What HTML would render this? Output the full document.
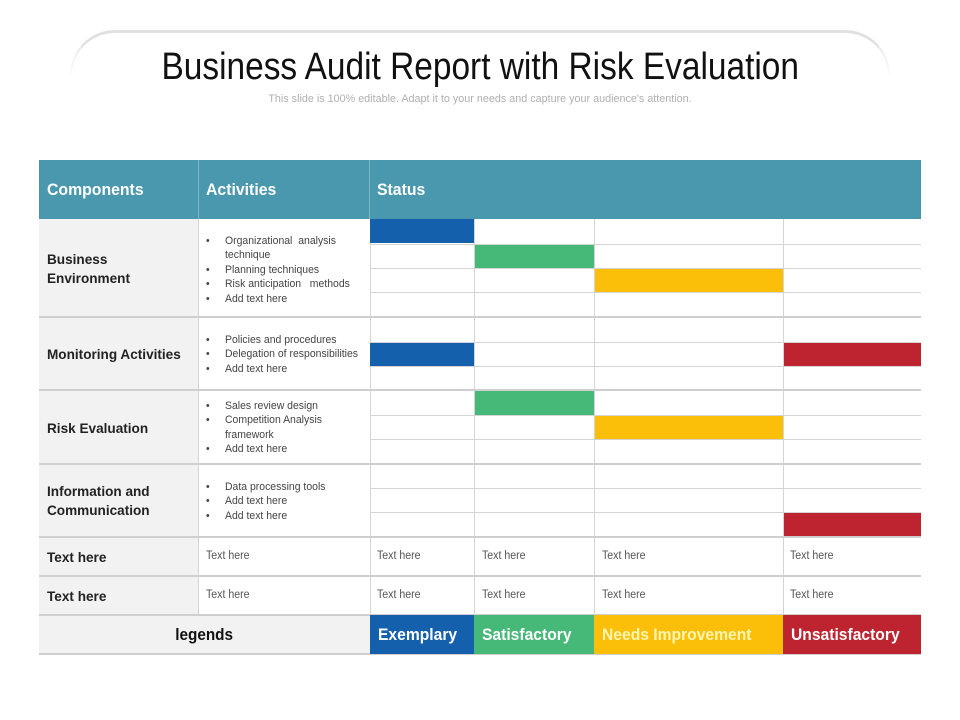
<!DOCTYPE html>
<html><head><meta charset="utf-8"><style>
*{margin:0;padding:0;box-sizing:border-box}
body{width:960px;height:720px;background:#fff;position:relative;overflow:hidden;font-family:"Liberation Sans",sans-serif}
.a{position:absolute}
.arc{left:70px;top:30px;width:820px;height:60px;border-top:3px solid #e0e0e0;border-radius:45px 45px 0 0;border-left:2px solid #ececec;border-right:2px solid #ececec;-webkit-mask:linear-gradient(#000 30%,transparent 80%);mask:linear-gradient(#000 30%,transparent 80%)}
.t{left:0;width:960px;top:46px;text-align:center;font-size:38px;color:#111}
.t span{display:inline-block;transform:scaleX(.88)}
.st{left:0;width:960px;top:93px;text-align:center;font-size:11px;color:#b0b0b0}
.st span{display:inline-block;transform:scaleX(.98)}
.hd{background:#4a98ae;top:160px;height:59px}
.hl{color:#fff;font-weight:bold;font-size:17px;top:180px;transform:scaleX(.93);transform-origin:left}
.lc{background:#f2f2f2;left:39px;width:159px}
.bl{font-weight:bold;font-size:14px;color:#222;left:47px;transform:scaleX(.97);transform-origin:left;line-height:19px}
.ul{left:206px;font-size:11px;color:#444;line-height:14.4px;transform:scaleX(.95);transform-origin:left;white-space:nowrap}
.ul div{padding-left:20px;position:relative}
.ul div:before{content:"•";position:absolute;left:0}
.hline{height:1px;background:#d4d4d4}
.mline{height:2px;background:#cfcfcf}
.vline{width:1px;background:#d4d4d4}
.sm{font-size:11.5px;color:#555;transform:scaleX(.92);transform-origin:left}
.lg{top:615px;height:39px;color:#fff;font-weight:bold;font-size:17px;line-height:39px;padding-left:8px}
.lg span{display:inline-block;transform:scaleX(.92);transform-origin:left;white-space:nowrap}
</style></head><body>
<div class="a arc"></div>
<div class="a t"><span>Business Audit Report with Risk Evaluation</span></div>
<div class="a st"><span>This slide is 100% editable. Adapt it to your needs and capture your audience's attention.</span></div>

<div class="a hd" style="left:39px;width:882px"></div>
<div class="a" style="left:198px;top:160px;width:1px;height:59px;background:#7fb7c7"></div>
<div class="a" style="left:369px;top:160px;width:1px;height:59px;background:#7fb7c7"></div>
<div class="a hl" style="left:47px">Components</div>
<div class="a hl" style="left:206px">Activities</div>
<div class="a hl" style="left:377px">Status</div>

<div class="a lc" style="top:219px;height:435px"></div>
<div class="a" style="left:39px;width:331px;top:615px;height:39px;background:#f2f2f2"></div>

<!-- vertical lines -->
<div class="a vline" style="left:198px;top:219px;height:396px"></div>
<div class="a vline" style="left:370px;top:219px;height:435px"></div>
<div class="a vline" style="left:474px;top:219px;height:396px"></div>
<div class="a vline" style="left:594px;top:219px;height:396px"></div>
<div class="a vline" style="left:783px;top:219px;height:396px"></div>

<!-- sub-row lines -->
<div class="a hline" style="left:370px;width:551px;top:244px"></div>
<div class="a hline" style="left:370px;width:551px;top:268px"></div>
<div class="a hline" style="left:370px;width:551px;top:292px"></div>
<div class="a hline" style="left:370px;width:551px;top:342px"></div>
<div class="a hline" style="left:370px;width:551px;top:366px"></div>
<div class="a hline" style="left:370px;width:551px;top:415px"></div>
<div class="a hline" style="left:370px;width:551px;top:439px"></div>
<div class="a hline" style="left:370px;width:551px;top:488px"></div>
<div class="a hline" style="left:370px;width:551px;top:512px"></div>
<!-- major lines -->
<div class="a mline" style="left:39px;width:882px;top:316px"></div>
<div class="a mline" style="left:39px;width:882px;top:389px"></div>
<div class="a mline" style="left:39px;width:882px;top:463px"></div>
<div class="a mline" style="left:39px;width:882px;top:536px"></div>
<div class="a mline" style="left:39px;width:882px;top:575px"></div>
<div class="a mline" style="left:39px;width:882px;top:614px"></div>
<div class="a mline" style="left:39px;width:882px;top:653px"></div>

<!-- bars -->
<div class="a" style="left:370px;width:104px;top:219px;height:24px;background:#1460ad"></div>
<div class="a" style="left:475px;width:119px;top:245px;height:23px;background:#46b878"></div>
<div class="a" style="left:595px;width:188px;top:269px;height:23px;background:#fbbf0a"></div>
<div class="a" style="left:370px;width:104px;top:343px;height:23px;background:#1460ad"></div>
<div class="a" style="left:784px;width:137px;top:343px;height:23px;background:#bd2430"></div>
<div class="a" style="left:475px;width:119px;top:391px;height:24px;background:#46b878"></div>
<div class="a" style="left:595px;width:188px;top:416px;height:23px;background:#fbbf0a"></div>
<div class="a" style="left:784px;width:137px;top:513px;height:23px;background:#bd2430"></div>

<!-- labels -->
<div class="a bl" style="top:250px">Business<br>Environment</div>
<div class="a bl" style="top:345px;white-space:nowrap">Monitoring Activities</div>
<div class="a bl" style="top:419px">Risk Evaluation</div>
<div class="a bl" style="top:482px;white-space:nowrap">Information and<br>Communication</div>
<div class="a bl" style="top:548px">Text here</div>
<div class="a bl" style="top:587px">Text here</div>

<div class="a ul" style="top:234px"><div>Organizational&nbsp; analysis<br>technique</div><div>Planning techniques</div><div>Risk anticipation &nbsp;&nbsp;methods</div><div>Add text here</div></div>
<div class="a ul" style="top:333px"><div>Policies and procedures</div><div>Delegation of responsibilities</div><div>Add text here</div></div>
<div class="a ul" style="top:399px"><div>Sales review design</div><div>Competition Analysis<br>framework</div><div>Add text here</div></div>
<div class="a ul" style="top:480px"><div>Data processing tools</div><div>Add text here</div><div>Add text here</div></div>

<div class="a sm" style="left:206px;top:550px">Text here</div>
<div class="a sm" style="left:377px;top:550px">Text here</div>
<div class="a sm" style="left:482px;top:550px">Text here</div>
<div class="a sm" style="left:602px;top:550px">Text here</div>
<div class="a sm" style="left:790px;top:550px">Text here</div>
<div class="a sm" style="left:206px;top:589px">Text here</div>
<div class="a sm" style="left:377px;top:589px">Text here</div>
<div class="a sm" style="left:482px;top:589px">Text here</div>
<div class="a sm" style="left:602px;top:589px">Text here</div>
<div class="a sm" style="left:790px;top:589px">Text here</div>

<div class="a" style="left:39px;width:331px;top:615px;height:39px;line-height:39px;text-align:center;font-weight:bold;font-size:17px;color:#111"><span style="display:inline-block;transform:scaleX(.9)">legends</span></div>
<div class="a lg" style="left:370px;width:104px;background:#1460ad"><span>Exemplary</span></div>
<div class="a lg" style="left:474px;width:120px;background:#46b878"><span>Satisfactory</span></div>
<div class="a lg" style="left:594px;width:189px;background:#fbbf0a;color:#fff6b0"><span>Needs Improvement</span></div>
<div class="a lg" style="left:783px;width:138px;background:#bd2430"><span>Unsatisfactory</span></div>
</body></html>
